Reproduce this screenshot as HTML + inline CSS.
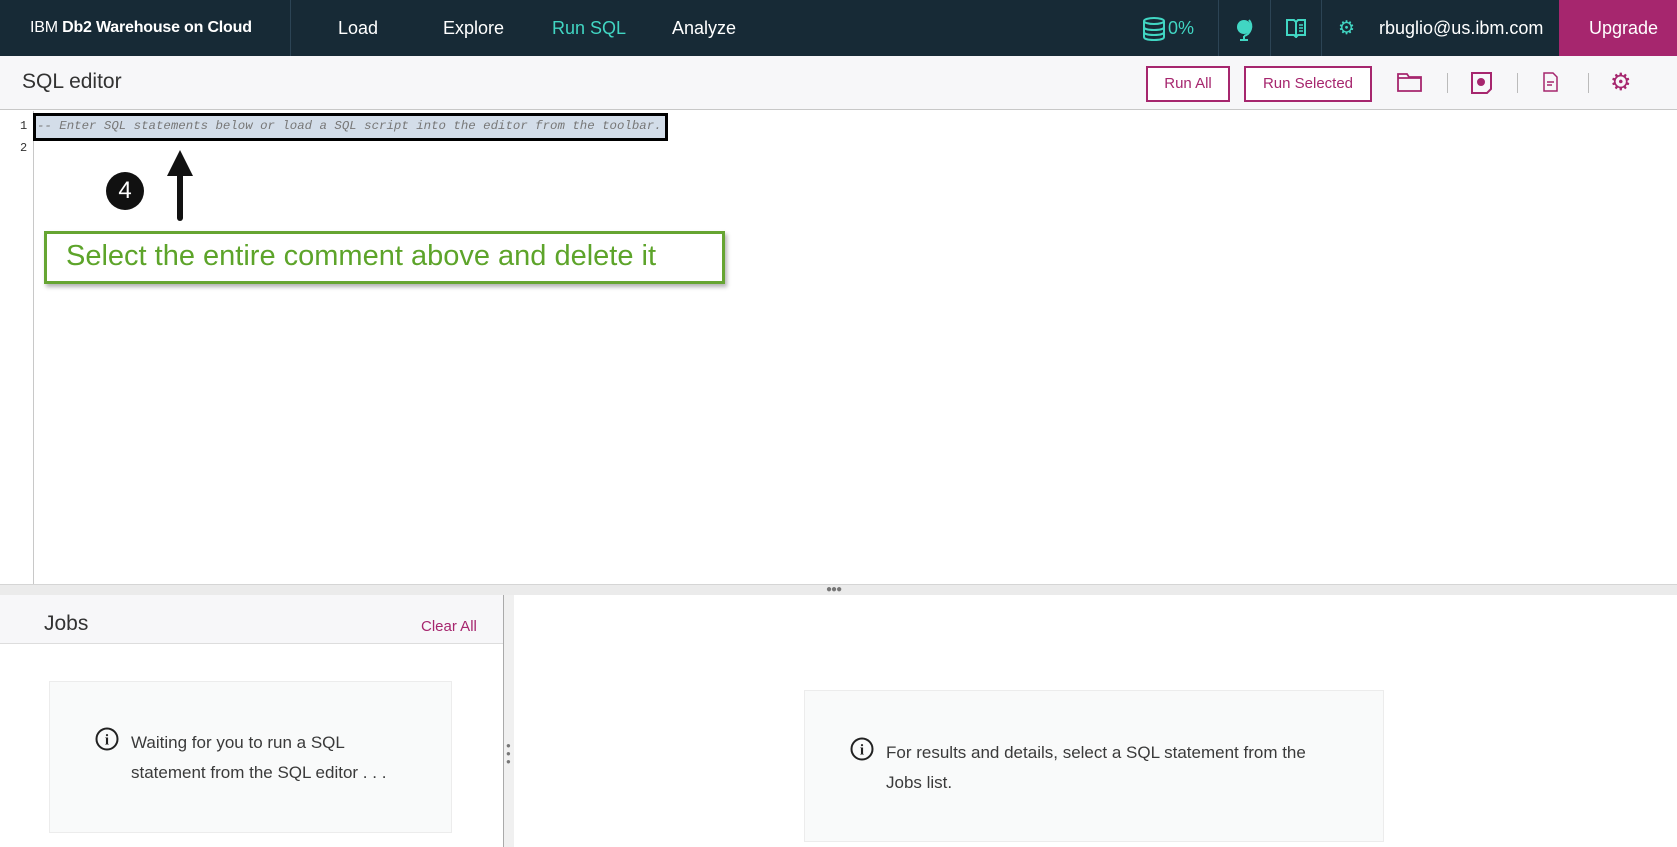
<!DOCTYPE html>
<html><head><meta charset="utf-8"><style>
*{margin:0;padding:0;box-sizing:border-box}
body{width:1677px;height:847px;overflow:hidden;background:#fff;font-family:"Liberation Sans",sans-serif;position:relative;color:#333}
.a{position:absolute;white-space:nowrap}
.nav{position:absolute;left:0;top:0;width:1677px;height:56px;background:#172a36}
.nl{color:#fff;font-size:18px;top:18px}
.vd{position:absolute;top:0;width:1px;height:56px;background:#2c4455}
.btn{position:absolute;border:2px solid #a6266e;color:#a6266e;font-size:15px;text-align:center;line-height:31px;background:#fff}
.sep{position:absolute;top:73px;width:1px;height:20px;background:#bbb}
.card{position:absolute;background:#f9fafa;border:1px solid #ececec}
.txt{font-size:17px;color:#3a3a3a;font-weight:300}
</style></head><body>
<div class="nav"></div>
<div class="a" style="left:30px;top:19px;color:#fff;font-size:16px;letter-spacing:-0.2px">IBM <b>Db2 Warehouse on Cloud</b></div>
<div class="vd" style="left:290px"></div>
<div class="a nl" style="left:338px">Load</div>
<div class="a nl" style="left:443px">Explore</div>
<div class="a nl" style="left:552px;color:#41d6c3">Run SQL</div>
<div class="a nl" style="left:672px">Analyze</div>
<svg class="a" style="left:1142px;top:17px" width="24" height="24" viewBox="0 0 24 24" fill="none" stroke="#41d6c3" stroke-width="2"><ellipse cx="12" cy="4" rx="10" ry="3"/><path d="M2 4v16c0 2 4.5 3 10 3s10-1 10-3V4M2 10c0 2 4.5 3 10 3s10-1 10-3M2 15c0 2 4.5 3 10 3s10-1 10-3"/></svg>
<div class="a" style="left:1168px;top:18px;color:#41d6c3;font-size:18px">0%</div>
<div class="vd" style="left:1218px"></div>
<svg class="a" style="left:1234px;top:17px" width="22" height="24" viewBox="0 0 22 24"><circle cx="10" cy="10" r="7" fill="#41d6c3"/><path d="M15 3a10 10 0 0 1-5 16M10 19v4M6 23h8" stroke="#41d6c3" stroke-width="2" fill="none"/></svg>
<div class="vd" style="left:1270px"></div>
<svg class="a" style="left:1286px;top:18px" width="20" height="20" viewBox="0 0 20 20" fill="none" stroke="#41d6c3" stroke-width="2"><path d="M1 2h7l2 2v15l-2-2H1zM10 4l2-2h7v15h-7l-2 2"/><path d="M13 7h4M13 10h4M13 13h4" stroke-width="1.5"/></svg>
<div class="vd" style="left:1321px"></div>
<div class="a" style="left:1338px;top:17px;color:#41d6c3;font-size:19px">⚙</div>
<div class="a" style="left:1379px;top:18px;color:#fff;font-size:18px">rbuglio@us.ibm.com</div>
<div class="a" style="left:1559px;top:0;width:118px;height:56px;background:#a6266e"></div>
<div class="a" style="left:1589px;top:18px;color:#fff;font-size:18px">Upgrade</div>

<div class="a" style="left:0;top:56px;width:1677px;height:54px;background:#f7f7f9;border-bottom:1px solid #c8c8c8"></div>
<div class="a" style="left:22px;top:70px;font-size:21px;color:#333;font-weight:300">SQL editor</div>
<div class="btn" style="left:1146px;top:66px;width:84px;height:36px">Run All</div>
<div class="btn" style="left:1244px;top:66px;width:128px;height:36px">Run Selected</div>
<svg class="a" style="left:1397px;top:73px" width="25" height="19" viewBox="0 0 25 19" fill="none" stroke="#a6266e" stroke-width="1.8"><path d="M1 1h9l2 3h12v14H1zM1 5h23"/></svg>
<div class="sep" style="left:1447px"></div>
<svg class="a" style="left:1471px;top:72px" width="21" height="22" viewBox="0 0 21 22" fill="none" stroke="#a6266e" stroke-width="2"><path d="M1 1h19v16l-4 4H1z"/><circle cx="10" cy="10" r="3" fill="#a6266e"/></svg>
<div class="sep" style="left:1517px"></div>
<svg class="a" style="left:1543px;top:72px" width="15" height="20" viewBox="0 0 15 20" fill="none" stroke="#a6266e" stroke-width="1.5"><path d="M1 1h9l4 4v14H1zM4 10h7M4 13h5"/></svg>
<div class="sep" style="left:1588px"></div>
<div class="a" style="left:1610px;top:68px;color:#a6266e;font-size:24px">⚙</div>

<div class="a" style="left:33px;top:111px;width:1px;height:473px;background:#c8c8c8"></div>
<div class="a" style="left:20px;top:119px;font-family:'Liberation Mono',monospace;font-size:12px;color:#333">1</div>
<div class="a" style="left:20px;top:141px;font-family:'Liberation Mono',monospace;font-size:12px;color:#333">2</div>
<div class="a" style="left:33px;top:113px;width:635px;height:28px;border:3px solid #000;background:#d3dde9"></div>
<div class="a" style="left:37px;top:119px;font-family:'Liberation Mono',monospace;font-style:italic;font-size:12.4px;color:#777">-- Enter SQL statements below or load a SQL script into the editor from the toolbar.</div>

<svg class="a" style="left:165px;top:148px" width="30" height="74" viewBox="0 0 30 74"><path d="M15 2L28 28H2z" fill="#111"/><path d="M15 24V70" stroke="#111" stroke-width="6" stroke-linecap="round"/></svg>
<div class="a" style="left:106px;top:172px;width:38px;height:38px;border-radius:50%;background:#111;color:#fff;font-size:24px;text-align:center;line-height:38px">4</div>
<div class="a" style="left:44px;top:231px;width:681px;height:53px;border:3px solid #66a532;box-shadow:2px 3px 4px rgba(0,0,0,.3);background:#fff"></div>
<div class="a" style="left:66px;top:240px;font-size:29px;color:#5da42a">Select the entire comment above and delete it</div>

<div class="a" style="left:0;top:584px;width:1677px;height:11px;background:#ebebeb;border-top:1px solid #d5d5d5"></div>
<div class="a" style="left:826px;top:584px;font-size:10px;color:#777;letter-spacing:-1px">●●●</div>
<div class="a" style="left:0;top:595px;width:503px;height:49px;background:#f7f7f9;border-bottom:1px solid #ddd"></div>
<div class="a" style="left:44px;top:612px;font-size:21px;font-weight:300;color:#333">Jobs</div>
<div class="a" style="left:421px;top:618px;font-size:15px;color:#a6266e">Clear All</div>
<div class="a" style="left:503px;top:595px;width:11px;height:252px;background:#f0f0f0;border-left:1px solid #aaa"></div>
<div class="a" style="left:506px;top:742px;width:5px;line-height:8px;font-size:8px;color:#777">●<br>●<br>●</div>
<div class="card" style="left:49px;top:681px;width:403px;height:152px"></div>
<svg class="a" style="left:95px;top:727px" width="24" height="24" viewBox="0 0 24 24"><circle cx="12" cy="12" r="10.5" fill="none" stroke="#222" stroke-width="2"/><text x="12" y="17.5" font-family="Liberation Serif" font-weight="bold" font-size="15" text-anchor="middle" fill="#222">i</text></svg>
<div class="a txt" style="left:131px;top:733px">Waiting for you to run a SQL</div>
<div class="a txt" style="left:131px;top:763px">statement from the SQL editor . . .</div>
<div class="card" style="left:804px;top:690px;width:580px;height:152px"></div>
<svg class="a" style="left:850px;top:737px" width="24" height="24" viewBox="0 0 24 24"><circle cx="12" cy="12" r="10.5" fill="none" stroke="#222" stroke-width="2"/><text x="12" y="17.5" font-family="Liberation Serif" font-weight="bold" font-size="15" text-anchor="middle" fill="#222">i</text></svg>
<div class="a txt" style="left:886px;top:743px">For results and details, select a SQL statement from the</div>
<div class="a txt" style="left:886px;top:773px">Jobs list.</div>
</body></html>
